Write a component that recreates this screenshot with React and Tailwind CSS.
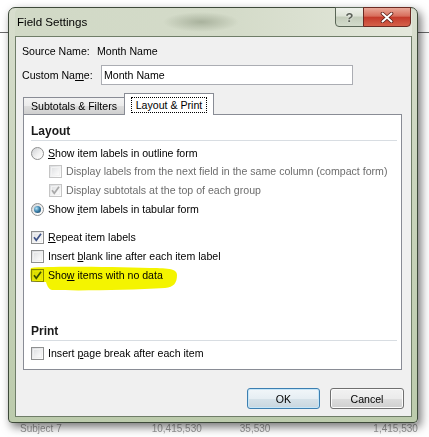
import React from "react";

function CheckBox({ checked, disabled }) {
  return (
    <span
      className={`relative flex h-[13px] w-[13px] shrink-0 items-center justify-center border ${
        disabled ? "border-[#c5c5c5]" : "border-[#8e8f8f]"
      } bg-[linear-gradient(135deg,#d9dbde,#f7f7f7_70%,#ffffff)]`}
    >
      <span
        className={`absolute inset-[1px] border ${
          disabled ? "border-[#f2f2f2]" : "border-[#f0f0f0]"
        }`}
      />
      {checked && (
        <svg width="11" height="11" viewBox="0 0 11 11" className="relative">
          <path
            d="M2 5.2 L4.3 8.3 L9 1.8"
            fill="none"
            stroke={disabled ? "#a8a8a8" : "#3e5388"}
            strokeWidth="1.7"
          />
        </svg>
      )}
    </span>
  );
}

function Radio({ checked }) {
  return (
    <span className="flex h-[13px] w-[13px] shrink-0 items-center justify-center rounded-full border border-[#8e8f8f] bg-[linear-gradient(135deg,#cfd1d4,#f4f4f4_60%,#ffffff)]">
      {checked && (
        <span className="h-[7px] w-[7px] rounded-full bg-[radial-gradient(circle_at_35%_35%,#b5e4f8_0%,#3f84ad_45%,#0c3050_100%)]" />
      )}
    </span>
  );
}

export default function App() {
  return (
    <div className="relative h-[437px] w-[429px] overflow-hidden bg-white font-['Liberation_Sans',Arial,sans-serif] text-[10.6px] leading-[16px] text-black">
      {/* sheet behind the dialog */}
      <div className="absolute left-0 right-0 top-[32px] h-px bg-[#6a6a6a]" />
      <div className="absolute left-0 right-0 top-[423px] flex text-[10px] leading-[12px] text-[#9a9a9a]">
        <span className="ml-[20px]">Subject 7</span>
        <span className="ml-[90px]">10,415,530</span>
        <span className="ml-[38px]">35,530</span>
        <span className="ml-[103px]">1,415,530</span>
      </div>

      {/* dialog window */}
      <div className="absolute left-[8px] top-[7px] flex h-[416px] w-[410px] flex-col rounded-t-[7px] rounded-b-[4px] border border-[#3e4a3a] bg-[linear-gradient(180deg,#d8dece_0%,#cad5bd_40%,#bccbac_100%)] pb-[5px] pl-[6px] pr-[5px] shadow-[3px_4px_10px_rgba(0,0,0,0.55)]">
        {/* title bar */}
        <div className="relative flex h-[28px] shrink-0 items-center rounded-t-[6px] bg-[radial-gradient(ellipse_38px_10px_at_186px_14px,#a9b29d_0%,rgba(169,178,157,0)_100%),linear-gradient(90deg,#d1d9c6_0%,#d4dbc9_55%,#e4e8dc_100%)] pl-[2px]">
          <span className="text-[11.6px] text-black">Field Settings</span>
          <div className="absolute right-[1px] top-[-1px] flex h-[20px]">
            <div className="flex w-[29px] items-center justify-center rounded-bl-[4px] border border-[#5a6656] bg-[linear-gradient(180deg,#eef1ea_0%,#dde3d6_45%,#c3ccba_50%,#d3dbcb_100%)]">
              <span className="text-[13px] font-bold leading-none text-[#5b6157] [text-shadow:0_0_2px_#fff]">?</span>
            </div>
            <div className="-ml-px flex w-[48px] items-center justify-center rounded-br-[4px] border border-[#6b2a22] bg-[linear-gradient(180deg,#e9a898_0%,#d86e5c_45%,#c43b2b_52%,#d5614a_100%)]">
              <svg width="14" height="11" viewBox="0 0 14 11">
                <path d="M2.5 1.5 L11.5 9.5 M11.5 1.5 L2.5 9.5" stroke="#5a1e16" strokeWidth="3.6" strokeLinecap="round" />
                <path d="M2.5 1.5 L11.5 9.5 M11.5 1.5 L2.5 9.5" stroke="#ffffff" strokeWidth="2" strokeLinecap="round" />
              </svg>
            </div>
          </div>
        </div>

        {/* client area */}
        <div className="flex flex-1 flex-col border border-[#6f7d68] bg-[#f0f0f0] px-[6px] pt-[6px]">
          <div className="flex h-[16px] items-center">
            <span className="w-[75px]">Source Name:</span>
            <span>Month Name</span>
          </div>
          <div className="mt-[6px] flex h-[20px] items-center">
            <span className="w-[79px]">
              Custom Na<span className="underline underline-offset-[1px]">m</span>e:
            </span>
            <div className="flex h-[20px] w-[252px] items-center border border-[#abadb3] bg-white pl-[2px]">
              Month Name
            </div>
          </div>

          {/* tabs */}
          <div className="ml-[1px] mt-[8px] flex items-end">
            <div className="flex h-[17px] w-[102px] items-center justify-center border border-b-0 border-[#898c95] bg-[linear-gradient(180deg,#f3f3f3_0%,#ebebeb_50%,#dddddd_51%,#cfcfcf_100%)]">
              Subtotals &amp; Filters
            </div>
            <div className="relative z-10 -mb-px -ml-px flex h-[22px] w-[90px] items-start justify-center border border-b-0 border-[#898c95] bg-white pt-[3px]">
              <span className="border border-dotted border-black px-[4px] leading-[14px]">Layout &amp; Print</span>
            </div>
          </div>
          <div className="relative ml-[1px] flex h-[256px] w-[379px] flex-col border border-[#898c95] bg-white px-[7px] pt-[8px]">
            <span className="text-[12px] font-bold leading-[16px] text-[#1a1a1a]">Layout</span>
            <div className="mr-[-3px] mt-[1px] h-px bg-[#d8dde2]" />

            <div className="mt-[4px] flex h-[16px] items-center gap-[4px]">
              <Radio />
              <span>
                <span className="underline underline-offset-[1px]">S</span>how item labels in outline form
              </span>
            </div>
            <div className="ml-[18px] mt-[2px] flex h-[16px] items-center gap-[4px] text-[#6d6d6d]">
              <CheckBox disabled />
              <span className="whitespace-nowrap">Display labels from the next field in the same column (compact form)</span>
            </div>
            <div className="ml-[18px] mt-[3px] flex h-[16px] items-center gap-[4px] text-[#6d6d6d]">
              <CheckBox checked disabled />
              <span>Display subtotals at the top of each group</span>
            </div>
            <div className="mt-[3px] flex h-[16px] items-center gap-[4px]">
              <Radio checked />
              <span>
                Show <span className="underline underline-offset-[1px]">i</span>tem labels in tabular form
              </span>
            </div>

            <div className="mt-[12px] flex h-[16px] items-center gap-[4px]">
              <CheckBox checked />
              <span>
                <span className="underline underline-offset-[1px]">R</span>epeat item labels
              </span>
            </div>
            <div className="mt-[3px] flex h-[16px] items-center gap-[4px]">
              <CheckBox />
              <span>
                Insert <span className="underline underline-offset-[1px]">b</span>lank line after each item label
              </span>
            </div>
            <div className="relative mt-[3px] flex h-[16px] items-center gap-[4px]">
              <CheckBox checked />
              <span>
                Sho<span className="underline underline-offset-[1px]">w</span> items with no data
              </span>
              <svg
                className="pointer-events-none absolute left-[-1px] top-[-2px] mix-blend-multiply"
                width="148"
                height="27"
                viewBox="0 0 148 27"
              >
                <path
                  d="M1 3 C20 1 80 2 120 3 C140 3 147 4 147 10 C147 18 144 22 135 23 C100 25 50 26 22 25 C18 24 17 20 16 17 C10 17 4 17 1 16 C0 12 0 6 1 3 Z"
                  fill="#f4f400"
                />
              </svg>
            </div>

            <span className="mt-[40px] text-[12px] font-bold leading-[16px] text-[#1a1a1a]">Print</span>
            <div className="mr-[-3px] mt-[1px] h-px bg-[#d8dde2]" />
            <div className="mt-[4px] flex h-[16px] items-center gap-[4px]">
              <CheckBox />
              <span>
                Insert <span className="underline underline-offset-[1px]">p</span>age break after each item
              </span>
            </div>
          </div>

          {/* buttons */}
          <div className="mr-[1px] mt-[18px] flex justify-end gap-[10px]">
            <button className="flex h-[21px] w-[73px] items-center justify-center rounded-[3px] border border-[#3c7fb1] bg-[linear-gradient(180deg,#f1f6f9_0%,#e6eef3_50%,#d6e2e9_51%,#c8d6df_100%)] shadow-[inset_0_0_0_1px_#c6e6f8]">
              OK
            </button>
            <button className="flex h-[21px] w-[74px] items-center justify-center rounded-[3px] border border-[#707070] bg-[linear-gradient(180deg,#f2f2f2_0%,#ebebeb_50%,#dddddd_51%,#cfcfcf_100%)] shadow-[inset_0_0_0_1px_#fbfbfb]">
              Cancel
            </button>
          </div>
        </div>
      </div>
    </div>
  );
}
